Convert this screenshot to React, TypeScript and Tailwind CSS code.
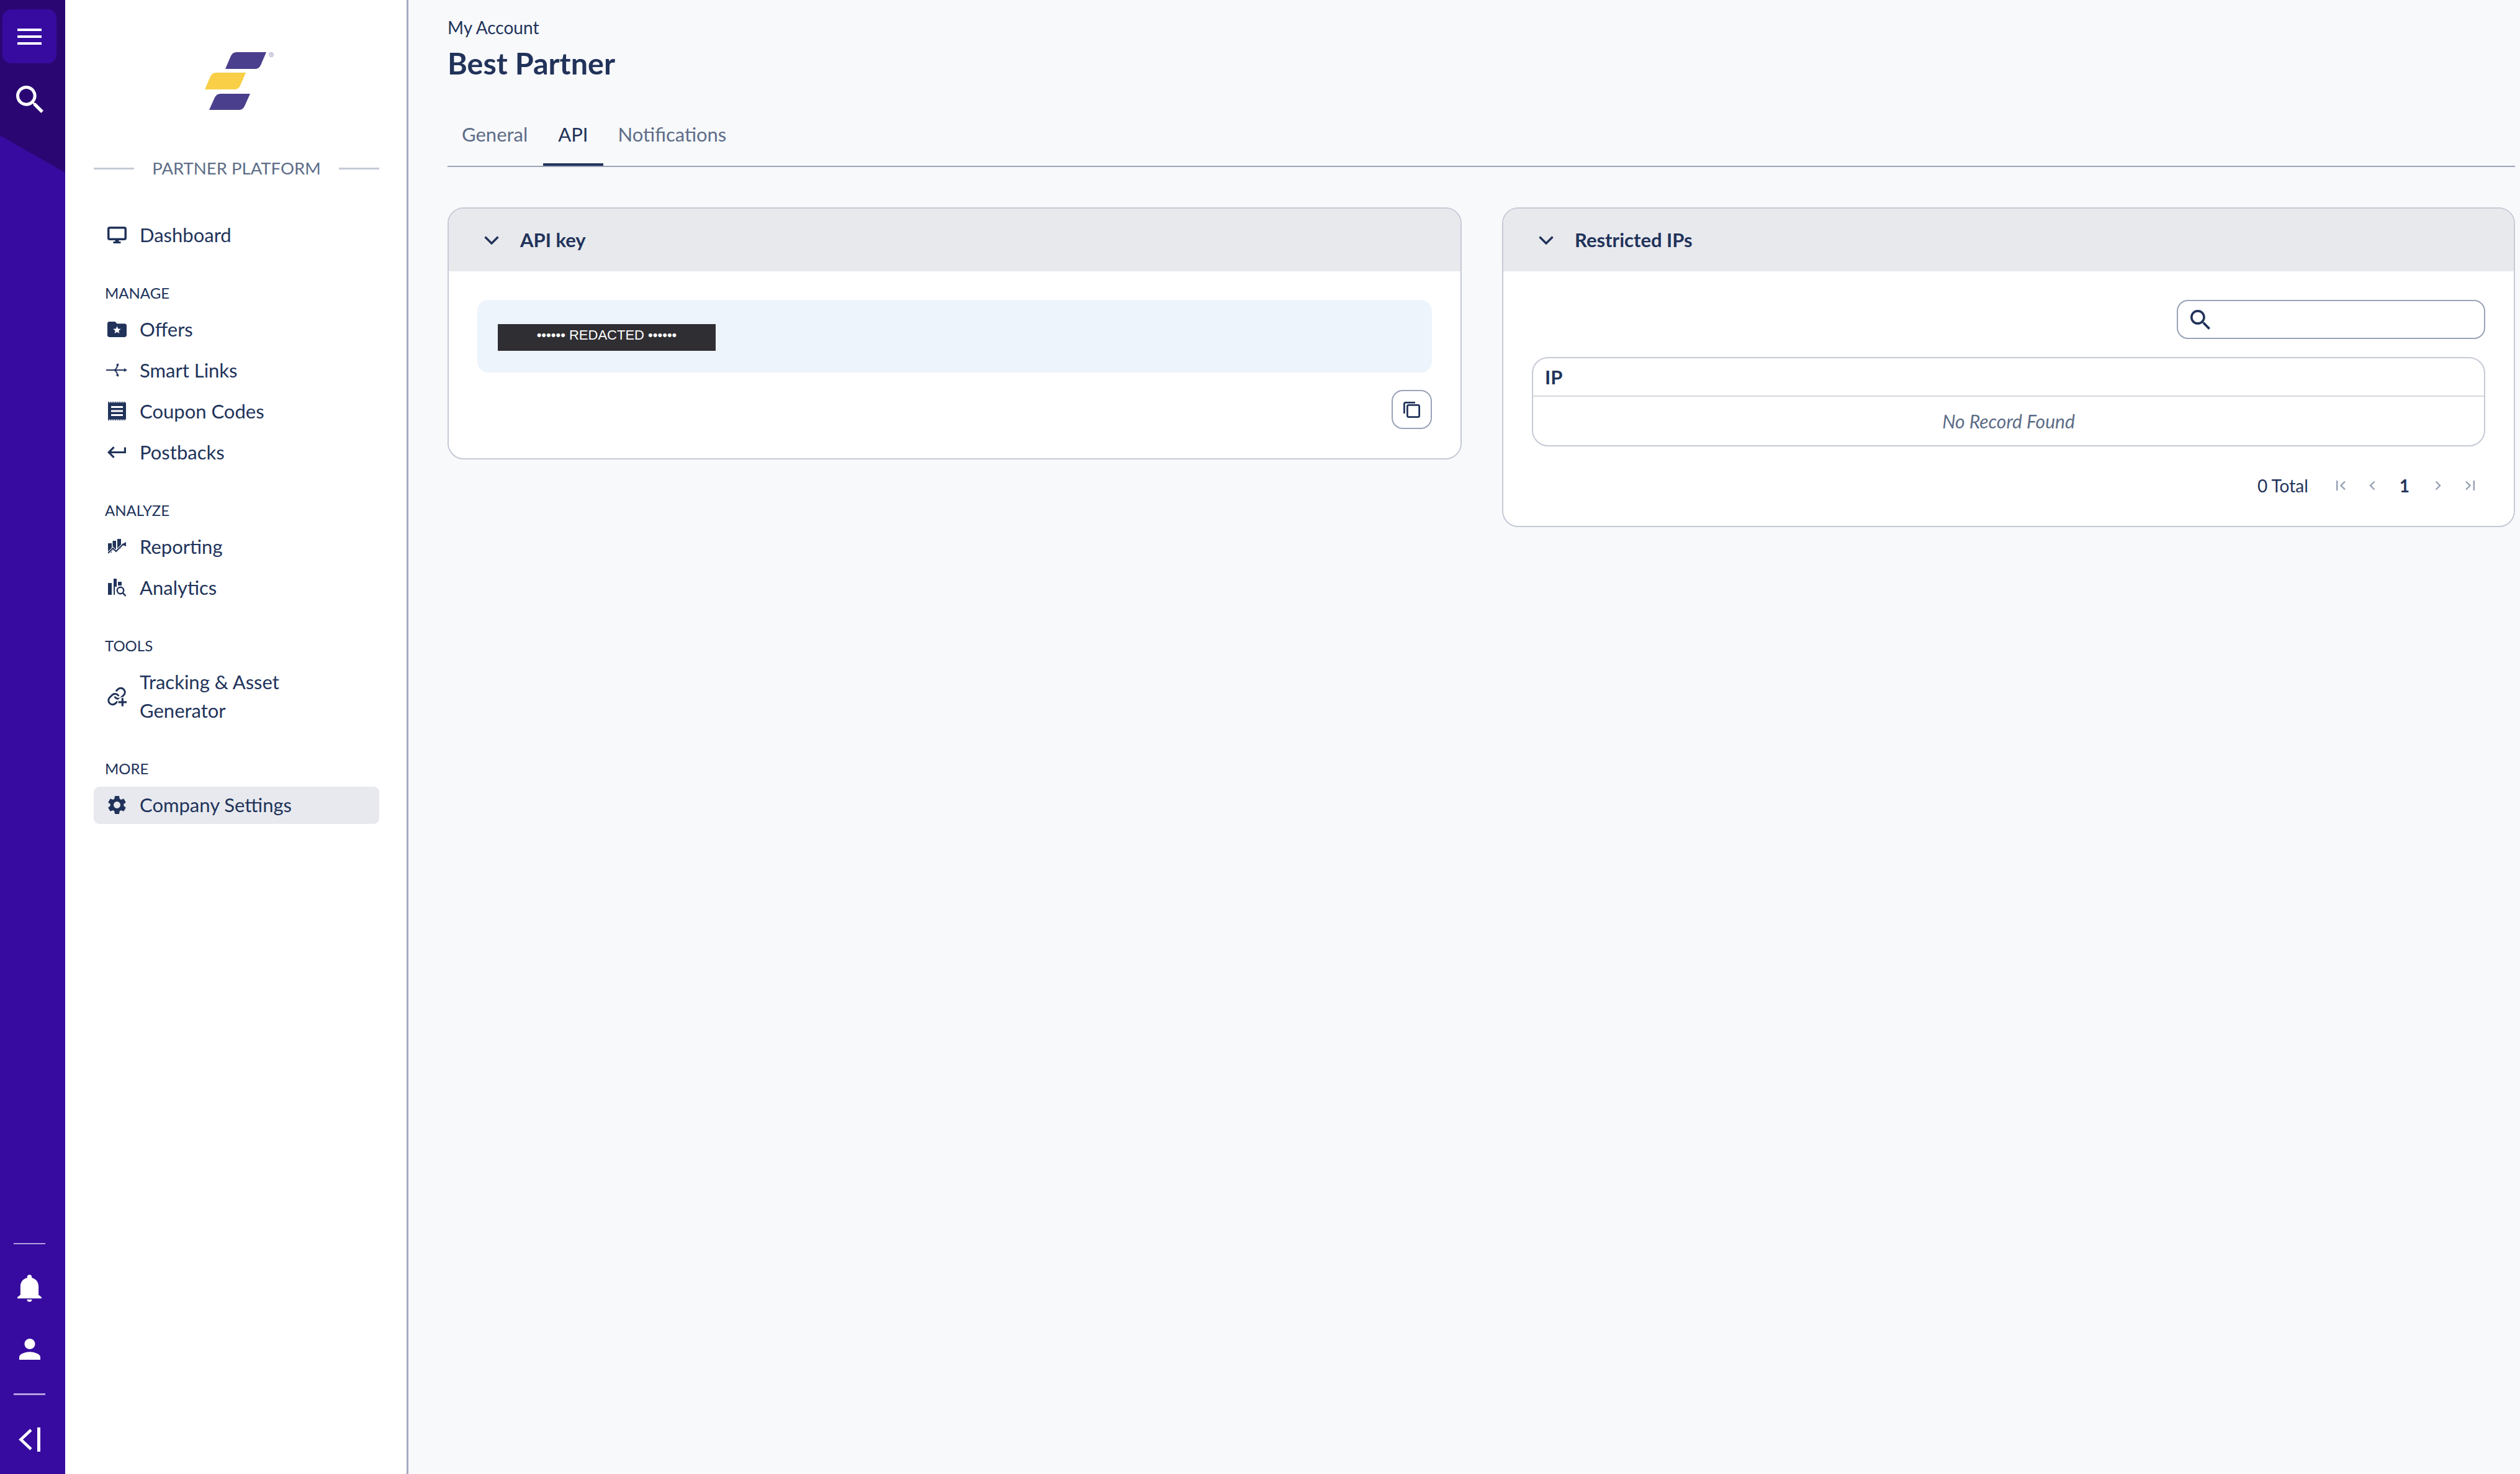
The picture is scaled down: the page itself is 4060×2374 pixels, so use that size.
import React from "react";

function NavRow({ icon, label, active }: { icon: React.ReactNode; label: React.ReactNode; active?: boolean }) {
  return (
    <div className={`flex items-center rounded-[9px] pt-[6px] pb-[8px] text-[31px] leading-[46px] ${active ? "bg-[#e8e9ee]" : ""}`}>
      <span className="flex w-[74px] shrink-0 justify-center">{icon}</span>
      <span>{label}</span>
    </div>
  );
}

function SectionLabel({ children }: { children: React.ReactNode }) {
  return <div className="mb-[15px] mt-[49px] pl-[18px] text-[24px] leading-[28px]">{children}</div>;
}

function Chevron() {
  return (
    <svg width="24" height="14" viewBox="0 0 24 14" fill="none" stroke="#21335a" strokeWidth="3.4">
      <path d="M1.5 1.5 12 12 22.5 1.5" />
    </svg>
  );
}

function CardHeader({ title }: { title: string }) {
  return (
    <div className="flex h-[101px] items-center gap-[34px] bg-[#e8e9ed] pl-[57px] text-[31px] font-bold">
      <Chevron />
      <span>{title}</span>
    </div>
  );
}

function PagerIcon({ d, w }: { d: string; w: number }) {
  return (
    <svg width={w} height="16" viewBox={`0 0 ${w} 16`} fill="none" stroke="#95a0b3" strokeWidth="2.4">
      <path d={d} />
    </svg>
  );
}

export default function App() {
  return (
    <div className="flex h-screen w-full overflow-hidden bg-[#f8f9fb] font-['Lato',sans-serif] text-[#21335a]">
      {/* rail */}
      <div className="relative flex w-[105px] shrink-0 flex-col items-center bg-[#370b9f] pr-[10px] pt-[15px] pb-[12px]">
        <div className="absolute left-0 top-0 h-[278px] w-full bg-[#2a0672] [clip-path:polygon(0_0,100%_0,100%_100%,0_78.4%)]"></div>
        <button className="relative flex h-[87px] w-[87px] items-center justify-center rounded-[14px] bg-[#370b9f]">
          <svg width="39" height="26" viewBox="0 0 39 26" fill="white">
            <rect width="39" height="4" y="0" />
            <rect width="39" height="4" y="11" />
            <rect width="39" height="4" y="22" />
          </svg>
        </button>
        <button className="relative mt-[14px] flex h-[87px] w-[87px] items-center justify-center">
          <svg width="44" height="44" viewBox="3 3 17.5 17.5" fill="white">
            <path d="M15.5 14h-.79l-.28-.27C15.41 12.59 16 11.11 16 9.5 16 5.91 13.09 3 9.5 3S3 5.91 3 9.5 5.91 16 9.5 16c1.61 0 3.09-.59 4.23-1.57l.27.28v.79l5 4.99L20.49 19l-4.99-5zm-6 0C7.01 14 5 11.99 5 9.5S7.01 5 9.5 5 14 7.01 14 9.5 11.99 14 9.5 14z" />
          </svg>
        </button>
        <div className="mt-auto h-[2px] w-[51px] bg-[#b59fe0]"></div>
        <button className="mt-[27px] flex h-[87px] w-[87px] items-center justify-center">
          <svg width="39" height="44" viewBox="4 2.5 16 19.6" preserveAspectRatio="none" fill="white">
            <path d="M6 11c0-3.08 1.64-5.64 4.5-6.32V4c0-.83.67-1.5 1.5-1.5s1.5.67 1.5 1.5v.68C16.37 5.36 18 7.93 18 11v6l2 1.6v.9H4v-.9L6 17z" />
            <path d="M10.3 20.3h3.4c0 .9-.8 1.7-1.7 1.7s-1.7-.8-1.7-1.7z" />
          </svg>
        </button>
        <button className="mt-[11px] flex h-[87px] w-[87px] items-center justify-center">
          <svg width="34" height="34" viewBox="4 4 16 16" fill="white">
            <path d="M12 12c2.21 0 4-1.79 4-4s-1.79-4-4-4-4 1.79-4 4 1.79 4 4 4zm0 2c-2.67 0-8 1.34-8 4v2h16v-2c0-2.66-5.33-4-8-4z" />
          </svg>
        </button>
        <div className="mt-[28px] h-[3px] w-[51px] bg-[#b59fe0]"></div>
        <button className="mt-[28px] flex h-[87px] w-[87px] items-center justify-center">
          <svg width="35" height="39" viewBox="0 0 35 39" fill="none" stroke="white" strokeWidth="4.6">
            <path d="M20 4 3.5 19.5 20 35" />
            <path d="M32.5 0v39" strokeWidth="5" />
          </svg>
        </button>
      </div>

      {/* sidebar */}
      <div className="flex w-[553px] shrink-0 flex-col border-r-[3px] border-[#a3abc0] bg-white pl-[46px] pr-[44px] pt-[84px]">
        <div className="flex justify-center">
          <svg width="120" height="93" viewBox="0 0 120 93">
            <path fill="#4a3f8c" d="M42 27 51 6Q54 0 60 0H108L99 21Q96 27 90 27Z" />
            <path fill="#f8cf47" d="M9 60 18 39Q21 33 27 33H75L66 54Q63 60 57 60Z" />
            <path fill="#4a3f8c" d="M16 93 25 73Q28 67 34 67H82L73 87Q70 93 64 93Z" />
            <circle cx="116" cy="4" r="3.4" fill="none" stroke="#8f89b8" strokeWidth="0.9" />
            <text x="116" y="5.8" textAnchor="middle" fontSize="5" fill="#8f89b8">R</text>
          </svg>
        </div>
        <div className="mt-[77px] flex h-[34px] items-center gap-[29px] text-[27.5px] text-[#5d6d88]">
          <div className="h-[3px] flex-1 bg-[#c5cad6]"></div>
          <span>PARTNER PLATFORM</span>
          <div className="h-[3px] flex-1 bg-[#c5cad6]"></div>
        </div>

        <div className="mt-[61px]">
          <NavRow
            label="Dashboard"
            icon={
              <svg width="31" height="27" viewBox="0 0 31 27">
                <rect x="1.75" y="1.75" width="27.5" height="18.5" rx="2" fill="none" stroke="#21335a" strokeWidth="3.5" />
                <path fill="#21335a" d="M12.5 21h6v3h-6zM9.5 24h12v3h-12z" />
              </svg>
            }
          />
        </div>

        <SectionLabel>MANAGE</SectionLabel>
        <div className="flex flex-col gap-[6px]">
          <NavRow
            label="Offers"
            icon={
              <svg width="31" height="25" viewBox="2 4 20 16">
                <path fill="#21335a" d="M20 6h-8l-2-2H4c-1.1 0-2 .9-2 2v12c0 1.1.9 2 2 2h16c1.1 0 2-.9 2-2V8c0-1.1-.9-2-2-2z" />
                <path fill="white" d="m12 8.6 1.1 2.7 2.9.2-2.2 1.9.7 2.8-2.5-1.5-2.5 1.5.7-2.8L8 11.5l2.9-.2z" />
              </svg>
            }
          />
          <NavRow
            label="Smart Links"
            icon={
              <svg width="34" height="22" viewBox="0 0 34 22" fill="none" stroke="#21335a" strokeWidth="2">
                <path d="M0 11h30M13 11c3-1 4.5-4 5.5-8M13 11c3 1 4.5 4 5.5 8" />
                <path fill="#21335a" stroke="none" d="M34 11l-5-3v6zM19.5 0l-4 3 5 1.5zM19.5 22l-4-3 5-1.5z" />
              </svg>
            }
          />
          <NavRow
            label="Coupon Codes"
            icon={
              <svg width="29" height="30" viewBox="0 0 29 30">
                <rect x="0" y="1.5" width="29" height="27" fill="#21335a" />
                <path d="M0 .8h29M0 29.2h29" stroke="#21335a" strokeWidth="1.6" strokeDasharray="2 1.6" />
                <path d="M5 8.5h19M5 15h19M5 21.5h19" stroke="white" strokeWidth="3" />
              </svg>
            }
          />
          <NavRow
            label="Postbacks"
            icon={
              <svg width="30" height="19" viewBox="2 6 19 12" preserveAspectRatio="none">
                <path fill="#21335a" d="M19 7v4H5.83l3.58-3.59L8 6l-6 6 6 6 1.41-1.41L5.83 13H21V7z" />
              </svg>
            }
          />
        </div>

        <SectionLabel>ANALYZE</SectionLabel>
        <div className="flex flex-col gap-[6px]">
          <NavRow
            label="Reporting"
            icon={
              <svg width="29" height="24" viewBox="0 0 29 24">
                <path fill="#21335a" d="M0 7h6v15H0zM7.5 3H13v16H7.5zM15 0h6v16h-6z" />
                <path d="M0 23 8 15l5 5L25 8" fill="none" stroke="white" strokeWidth="4" />
                <path d="M0 23 8 15l5 5L25 8" fill="none" stroke="#21335a" strokeWidth="2" />
                <path fill="#21335a" d="M29 5v7l-7-3z" />
              </svg>
            }
          />
          <NavRow
            label="Analytics"
            icon={
              <svg width="29" height="29" viewBox="0 0 29 29">
                <path fill="#21335a" d="M0 7h6v19H0zM9 0h5v13H9zM9 13h2v13H9zM16 5h6v6h-6z" />
                <circle cx="20" cy="19" r="5.2" fill="white" stroke="#21335a" strokeWidth="2.4" />
                <path d="M24 23l4.5 5" stroke="#21335a" strokeWidth="2.6" />
              </svg>
            }
          />
        </div>

        <SectionLabel>TOOLS</SectionLabel>
        <NavRow
          label={<>Tracking &amp; Asset<br />Generator</>}
          icon={
            <svg width="32" height="33" viewBox="0 0 24 24" fill="none" stroke="#21335a" strokeWidth="2.2" strokeLinecap="round">
              <path d="M10 13a5 5 0 0 0 7.54.54l3-3a5 5 0 0 0-7.07-7.07l-1.72 1.71" />
              <path d="M14 11a5 5 0 0 0-7.54-.54l-3 3a5 5 0 0 0 7.07 7.07l1.71-1.71" />
              <circle cx="19" cy="19" r="6" fill="white" stroke="none" />
              <path d="M19 14v10M14 19h10" strokeLinecap="butt" strokeWidth="2.4" />
            </svg>
          }
        />

        <SectionLabel>MORE</SectionLabel>
        <NavRow
          active
          label="Company Settings"
          icon={
            <svg width="29" height="29" viewBox="2.4 2.4 19.2 19.2">
              <path fill="#21335a" d="M19.14 12.94c.04-.3.06-.61.06-.94 0-.32-.02-.64-.07-.94l2.03-1.58c.18-.14.23-.41.12-.61l-1.92-3.32c-.12-.22-.37-.29-.59-.22l-2.39.96c-.5-.38-1.03-.7-1.62-.94L14.4 2.81c-.04-.24-.24-.41-.48-.41h-3.84c-.24 0-.43.17-.47.41L9.25 5.35c-.59.24-1.13.57-1.62.94l-2.39-.96c-.22-.08-.47 0-.59.22L2.74 8.87c-.12.21-.08.47.12.61l2.03 1.58c-.05.3-.09.63-.09.94s.02.64.07.94l-2.03 1.58c-.18.14-.23.41-.12.61l1.92 3.32c.12.22.37.29.59.22l2.39-.96c.5.38 1.03.7 1.62.94l.36 2.54c.05.24.24.41.48.41h3.84c.24 0 .44-.17.47-.41l.36-2.54c.59-.24 1.13-.56 1.62-.94l2.39.96c.22.08.47 0 .59-.22l1.92-3.32c.12-.22.07-.47-.12-.61l-2.01-1.58zM12 15.6c-1.98 0-3.6-1.62-3.6-3.6s1.62-3.6 3.6-3.6 3.6 1.62 3.6 3.6-1.62 3.6-3.6 3.6z" />
            </svg>
          }
        />
      </div>

      {/* main */}
      <div className="min-w-0 flex-1 pl-[63px] pr-[8px] pt-[28px]">
        <div className="text-[28px] leading-[32px]">My Account</div>
        <h1 className="mt-[13px] text-[48.5px] font-bold leading-[56px]">Best Partner</h1>

        <div className="mt-[40px] flex border-b-[2px] border-[#9aa5b8] text-[31px] text-[#5d6d88]">
          <div className="flex h-[98px] items-center border-b-[4px] border-transparent pl-[23px] pr-[25px]">General</div>
          <div className="flex h-[98px] items-center border-b-[4px] border-[#21335a] px-[24px] text-[#21335a]">API</div>
          <div className="flex h-[98px] items-center border-b-[4px] border-transparent px-[24px]">Notifications</div>
        </div>

        <div className="mt-[65px] grid grid-cols-[1634px_1fr] items-start gap-[65px]">
          {/* API key */}
          <div className="overflow-hidden rounded-[26px] border-[2px] border-[#c5cad6] bg-white">
            <CardHeader title="API key" />
            <div className="px-[46px] pb-[47px] pt-[46px]">
              <div className="flex h-[117px] items-start rounded-[18px] bg-[#edf4fc] pl-[33px] pt-[39px]">
                <div className="flex h-[43px] w-[351px] justify-center bg-[#2f2e33] pt-[4px] font-['Liberation_Sans',sans-serif] text-[22px] leading-[28px] text-white">
                  •••••• REDACTED ••••••
                </div>
              </div>
              <div className="mt-[28px] flex justify-end">
                <button className="flex h-[63px] w-[65px] items-center justify-center rounded-[18px] border-[2px] border-[#98a3b6]">
                  <svg width="27" height="26" viewBox="0 0 27 26" fill="none" stroke="#21335a" strokeWidth="2.8">
                    <rect x="6.4" y="5.4" width="19.2" height="19.2" rx="2" />
                    <path d="M1.4 19V3.4q0-2 2-2H19" />
                  </svg>
                </button>
              </div>
            </div>
          </div>

          {/* Restricted IPs */}
          <div className="overflow-hidden rounded-[26px] border-[2px] border-[#c5cad6] bg-white">
            <CardHeader title="Restricted IPs" />
            <div className="px-[46px] pb-[46px] pt-[46px]">
              <div className="flex justify-end">
                <div className="flex h-[63px] w-[497px] items-center gap-[16px] rounded-[18px] border-[2px] border-[#98a3b6] pl-[20px]">
                  <svg width="32" height="32" viewBox="3 3 17.5 17.5" fill="#21335a" className="shrink-0">
                    <path d="M15.5 14h-.79l-.28-.27C15.41 12.59 16 11.11 16 9.5 16 5.91 13.09 3 9.5 3S3 5.91 3 9.5 5.91 16 9.5 16c1.61 0 3.09-.59 4.23-1.57l.27.28v.79l5 4.99L20.49 19l-4.99-5zm-6 0C7.01 14 5 11.99 5 9.5S7.01 5 9.5 5 14 7.01 14 9.5 11.99 14 9.5 14z" />
                  </svg>
                  <input className="min-w-0 flex-1 bg-transparent text-[26px] outline-none" />
                </div>
              </div>
              <div className="mt-[29px] overflow-hidden rounded-[26px] border-[2px] border-[#c5cad6]">
                <div className="flex h-[62px] items-center border-b-[2px] border-[#d5d7dc] pl-[19px] text-[31px] font-bold">IP</div>
                <div className="flex h-[78px] items-center justify-center text-[30px] italic text-[#5d6d88]">No Record Found</div>
              </div>
              <div className="mt-[44px] flex h-[38px] items-center justify-end pr-[17px]">
                <span className="text-[28px]">0 Total</span>
                <span className="ml-[45px] flex"><PagerIcon w={15} d="M1.2 0v16M14 1.5 7.5 8 14 14.5" /></span>
                <span className="ml-[36px] flex"><PagerIcon w={12} d="M10.5 1.5 4 8l6.5 6.5" /></span>
                <span className="ml-[39px] text-[28px] font-bold">1</span>
                <span className="ml-[41px] flex"><PagerIcon w={10} d="M1.5 1.5 8 8l-6.5 6.5" /></span>
                <span className="ml-[39px] flex"><PagerIcon w={15} d="M1 1.5 7.5 8 1 14.5M13.8 0v16" /></span>
              </div>
            </div>
          </div>
        </div>
      </div>
    </div>
  );
}
